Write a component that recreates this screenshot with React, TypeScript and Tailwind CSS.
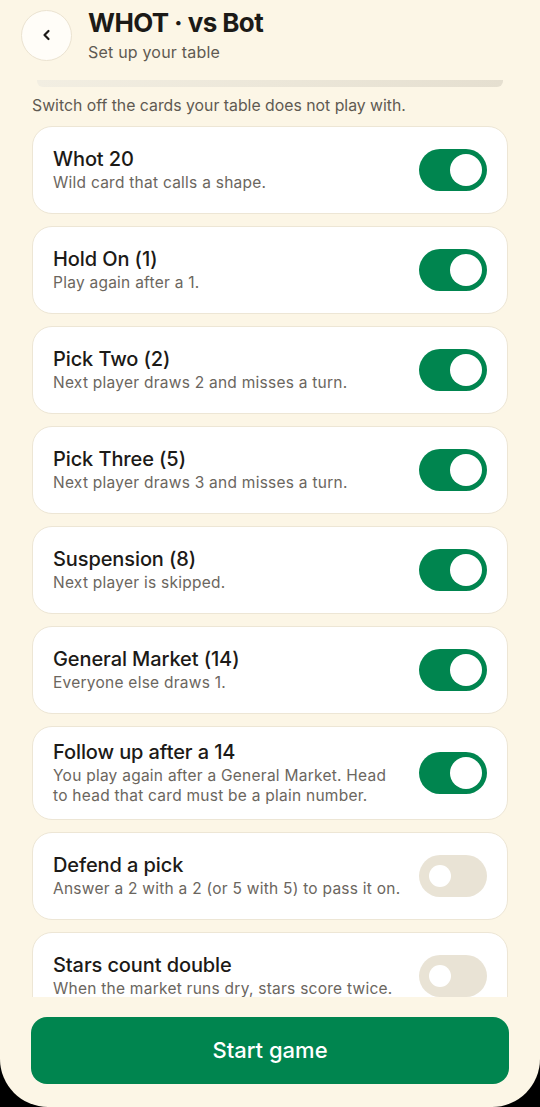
import React from "react";

type Rule = { title: string; desc: string; on: boolean };

const rules: Rule[] = [
  { title: "Whot 20", desc: "Wild card that calls a shape.", on: true },
  { title: "Hold On (1)", desc: "Play again after a 1.", on: true },
  { title: "Pick Two (2)", desc: "Next player draws 2 and misses a turn.", on: true },
  { title: "Pick Three (5)", desc: "Next player draws 3 and misses a turn.", on: true },
  { title: "Suspension (8)", desc: "Next player is skipped.", on: true },
  { title: "General Market (14)", desc: "Everyone else draws 1.", on: true },
  {
    title: "Follow up after a 14",
    desc: "You play again after a General Market. Head\nto head that card must be a plain number.",
    on: true,
  },
  { title: "Defend a pick", desc: "Answer a 2 with a 2 (or 5 with 5) to pass it on.", on: false },
  { title: "Stars count double", desc: "When the market runs dry, stars score twice.", on: false },
];

function Toggle({ on }: { on: boolean }) {
  if (on) {
    return (
      <div className="flex h-[42px] w-[68px] shrink-0 items-center justify-end rounded-full bg-[#00854f] pr-[5px]">
        <div className="h-[32px] w-[32px] rounded-full bg-white" />
      </div>
    );
  }
  return (
    <div className="flex h-[42px] w-[68px] shrink-0 items-center justify-start rounded-full bg-[#e9e3d5] pl-[10px]">
      <div className="h-[22px] w-[22px] rounded-full bg-white" />
    </div>
  );
}

export default function App() {
  return (
    <div className="h-[1107px] w-[540px] bg-black" style={{ fontFamily: "Inter, 'Liberation Sans', sans-serif" }}>
      <div className="flex h-full flex-col overflow-hidden rounded-b-[48px] bg-[#fcf6e6]">
        <div className="px-[21px] pt-[8px]">
          <div className="flex items-center gap-[16px]">
            <button className="flex h-[51px] w-[51px] items-center justify-center rounded-full border border-[#ebe3d1] bg-[#fffdf8]">
              <svg width="14" height="14" viewBox="0 0 14 14" fill="none">
                <path d="M8.5 3 L4.5 7 L8.5 11" stroke="#1c1a17" strokeWidth="2.2" strokeLinecap="round" strokeLinejoin="round" />
              </svg>
            </button>
            <div className="flex flex-col">
              <div className="text-[26px] font-bold leading-[30px] tracking-[-0.6px] text-[#1c1a17]">WHOT · vs Bot</div>
              <div className="mt-[4px] text-[16px] leading-[20px] tracking-[0.2px] text-[#5f5a52]">Set up your table</div>
            </div>
          </div>
        </div>
        <div className="mx-[37px] mt-[18px] h-[7px] rounded-b-[6px] bg-gradient-to-r from-[#f2eee2] via-[#ece7d9] to-[#e5dfd0]" />
        <div className="flex-1 overflow-hidden px-[32px]">
          <div className="mt-[9px] text-[15.8px] leading-[20px] text-[#5f5a52]">Switch off the cards your table does not play with.</div>
          <div className="mt-[10px] flex flex-col gap-[12px]">
            {rules.map((r) => (
              <div
                key={r.title}
                className="flex min-h-[88px] items-center justify-between gap-[12px] rounded-[20px] border border-[#ede6d5] bg-white px-[20px] py-[13px]"
              >
                <div className="flex flex-col">
                  <div className="text-[20px] font-medium leading-[24px] tracking-[-0.1px] text-[#1c1a17]">{r.title}</div>
                  <div className="mt-[2px] whitespace-pre-line text-[15.5px] leading-[20px] tracking-[0.25px] text-[#6b665e]">{r.desc}</div>
                </div>
                <Toggle on={r.on} />
              </div>
            ))}
          </div>
        </div>
        <div className="px-[31px] pb-[23px] pt-[20px]">
          <button className="flex h-[67px] w-full items-center justify-center rounded-[16px] bg-[#00854f] text-[22px] font-medium text-white">
            Start game
          </button>
        </div>
      </div>
    </div>
  );
}
